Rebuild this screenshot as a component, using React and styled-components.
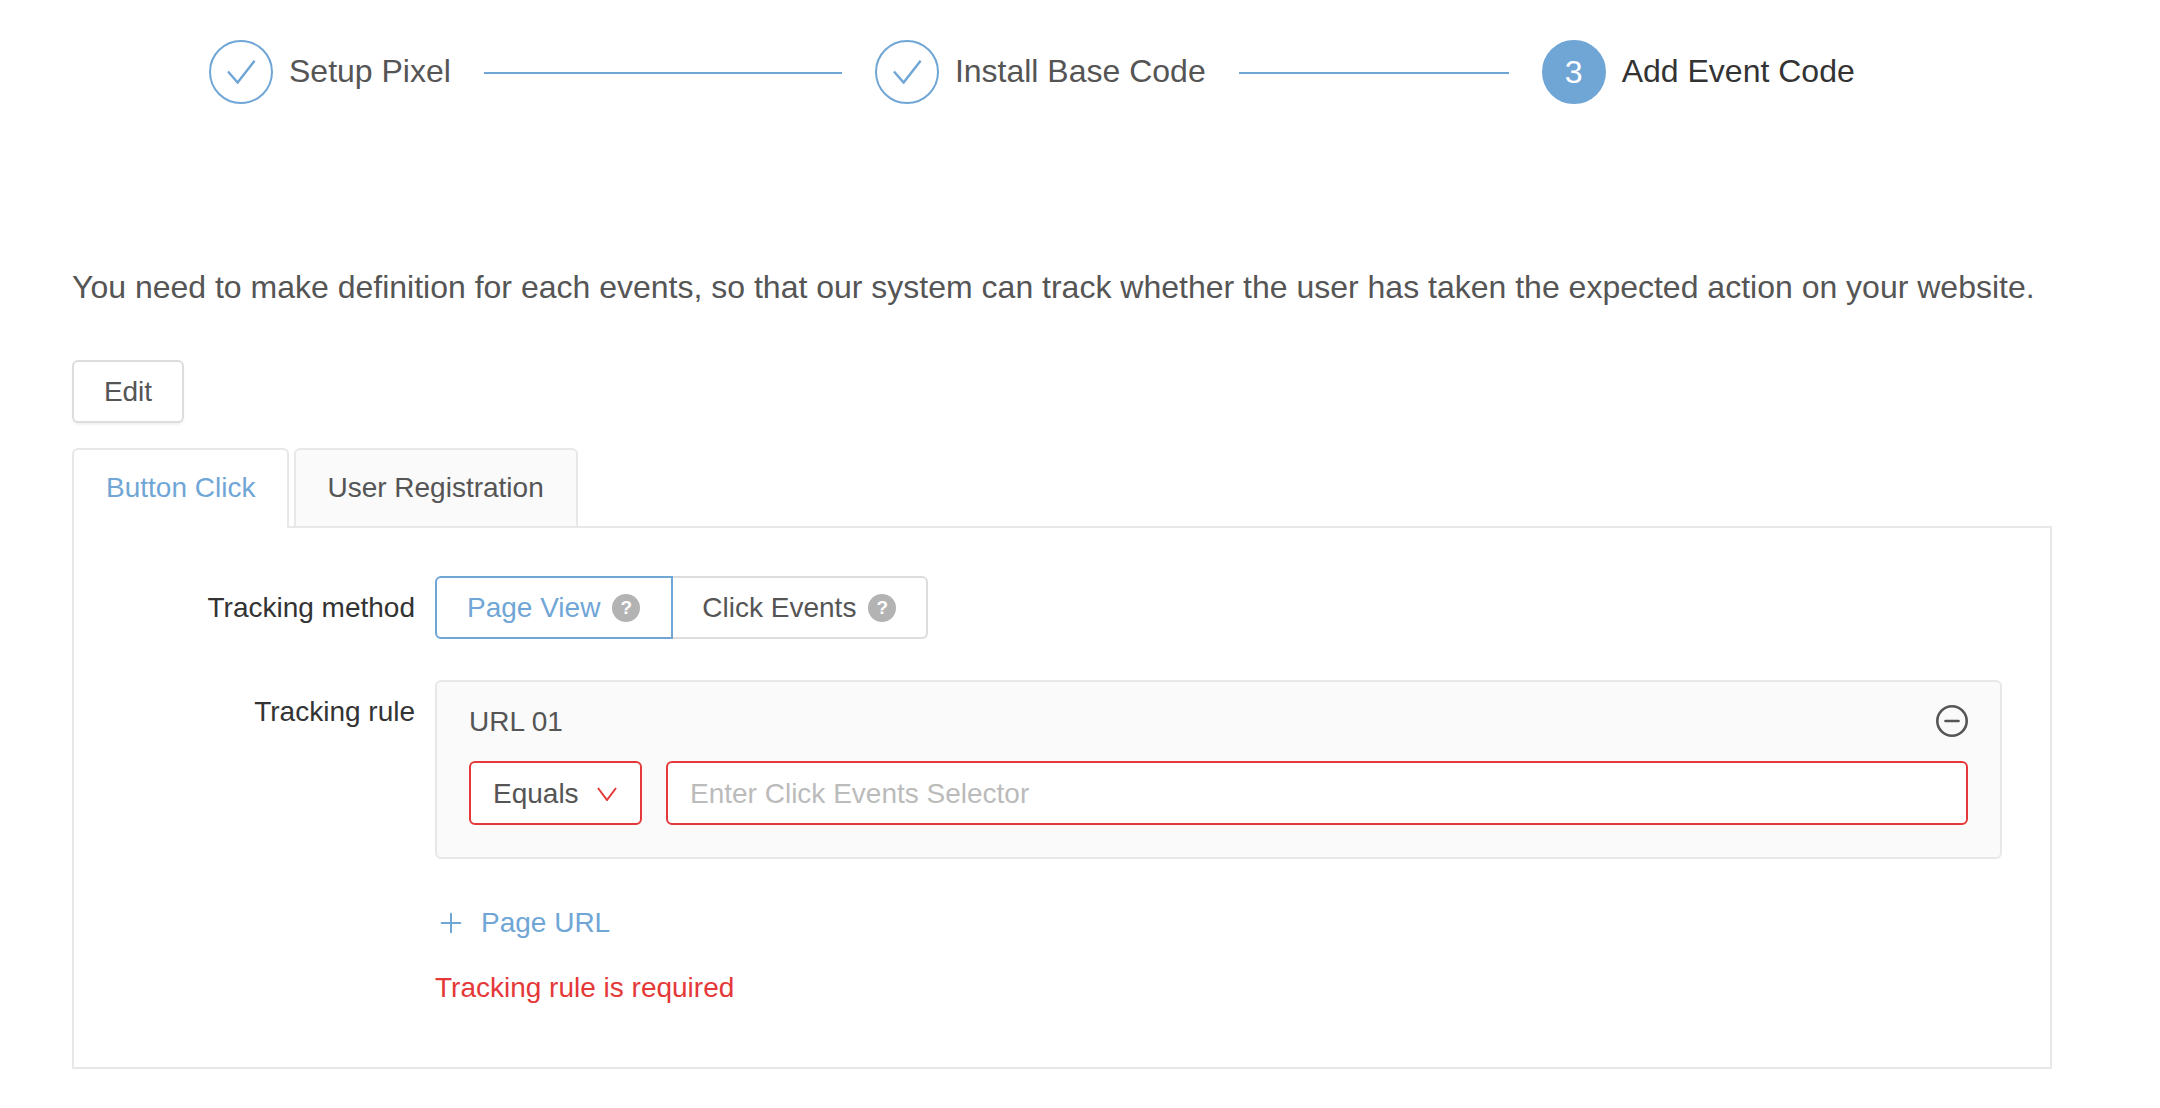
import React from 'react';
import styled, { createGlobalStyle } from 'styled-components';
import { Plus } from 'lucide-react';

const BLUE = '#70a6d6';
const RED = '#e53838';

const GlobalStyle = createGlobalStyle`
  html, body {
    margin: 0;
    padding: 0;
    background: #fff;
    overflow: hidden;
  }
  body {
    font-family: "Liberation Sans", Arial, sans-serif;
    color: #555;
  }
  * {
    box-sizing: border-box;
  }
`;

const Page = styled.div`
  width: 2160px;
  height: 1108px;
  padding: 40px 0 0 72px;
`;

const Stepper = styled.div`
  display: flex;
  align-items: center;
  height: 64px;
  padding-left: 137px;
`;

const StepCircle = styled.div`
  width: 64px;
  height: 64px;
  flex: none;
  border-radius: 50%;
  display: flex;
  align-items: center;
  justify-content: center;
  border: 2px solid ${BLUE};
  background: ${props => (props.$active ? BLUE : '#fff')};
  color: ${props => (props.$active ? '#fff' : BLUE)};
  font-size: 32px;
`;

const StepLabel = styled.span`
  margin: 0 0 2px 16px;
  font-size: 32px;
  line-height: 40px;
  white-space: nowrap;
  color: ${props => (props.$active ? '#333' : '#555')};
`;

const StepLine = styled.div`
  height: 2px;
  margin: 1px 33px 0;
  flex: none;
  width: ${props => props.$width}px;
  background: ${BLUE};
`;

const Intro = styled.p`
  margin: 163px 0 0;
  font-size: 32px;
  line-height: 40px;
  white-space: nowrap;
`;

const EditButton = styled.button`
  display: block;
  width: 112px;
  height: 63px;
  margin-top: 53px;
  padding: 0;
  background: #fff;
  border: 2px solid #ddd;
  border-radius: 6px;
  box-shadow: 0 2px 2px rgba(0, 0, 0, 0.05);
  font: inherit;
  font-size: 28px;
  color: #555;
`;

const Tabs = styled.div`
  display: flex;
  gap: 5px;
  margin-top: 25px;
  position: relative;
  z-index: 1;
`;

const Tab = styled.div`
  height: ${props => (props.$active ? 80 : 78)}px;
  margin-bottom: ${props => (props.$active ? -2 : 0)}px;
  padding: ${props => (props.$active ? '0 32px 2px' : '0 32px 0 31px')};
  display: flex;
  align-items: center;
  font-size: 28px;
  border: 2px solid #e8e8e8;
  border-bottom: none;
  border-radius: 6px 6px 0 0;
  background: ${props => (props.$active ? '#fff' : '#fafafa')};
  color: ${props => (props.$active ? BLUE : '#555')};
`;

const Panel = styled.div`
  width: 1980px;
  padding: 48px 0 59px;
  border: 2px solid #e8e8e8;
`;

const FormRow = styled.div`
  display: flex;
  align-items: flex-start;
  margin-top: ${props => props.$top || 0}px;
`;

const FormLabel = styled.div`
  width: 341px;
  margin-right: 20px;
  flex: none;
  text-align: right;
  font-size: 28px;
  line-height: 40px;
  padding-top: 12px;
  color: #333;
`;

const Segmented = styled.div`
  display: flex;
  height: 63px;
`;

const Segment = styled.div`
  display: flex;
  align-items: center;
  gap: 12px;
  height: 100%;
  font-size: 28px;
  padding: ${props => (props.$active ? '0 31px 0 30px' : '0 30px 0 29px')};
  border: 2px solid ${props => (props.$active ? BLUE : '#ddd')};
  border-left-width: ${props => (props.$active ? 2 : 0)}px;
  border-radius: ${props => (props.$active ? '6px 0 0 6px' : '0 6px 6px 0')};
  color: ${props => (props.$active ? BLUE : '#555')};
`;

const Help = styled.span`
  width: 28px;
  height: 28px;
  border-radius: 50%;
  background: #b3b3b3;
  color: #fff;
  font-size: 19px;
  font-weight: 700;
  line-height: 28px;
  text-align: center;
`;

const RuleColumn = styled.div`
  width: 1567px;
`;

const RuleBox = styled.div`
  height: 179px;
  padding: 23px 32px 32px 32px;
  background: #fafafa;
  border: 2px solid #e8e8e8;
  border-radius: 6px;
`;

const RuleHead = styled.div`
  display: flex;
  align-items: center;
  justify-content: space-between;
  height: 32px;
  font-size: 28px;
`;

const RuleTitle = styled.span`
  padding-top: 1px;
`;

const RuleInputs = styled.div`
  display: flex;
  gap: 24px;
  margin-top: 24px;
`;

const SelectBox = styled.div`
  width: 173px;
  height: 64px;
  flex: none;
  display: flex;
  align-items: center;
  justify-content: space-between;
  padding: 1px 23px 0 22px;
  background: #fff;
  border: 2px solid ${RED};
  border-radius: 6px;
  font-size: 28px;
  color: #555;
`;

const TextInput = styled.input`
  flex: 1;
  min-width: 0;
  height: 64px;
  padding: 1px 22px 0;
  background: #fff;
  border: 2px solid ${RED};
  border-radius: 6px;
  outline: none;
  font: inherit;
  font-size: 28px;

  &::placeholder {
    color: #bbb;
    opacity: 1;
  }
`;

const AddLink = styled.div`
  display: flex;
  align-items: center;
  gap: 14px;
  height: 40px;
  margin-top: 44px;
  font-size: 28px;
  color: ${BLUE};
`;

const ErrorText = styled.div`
  margin-top: 25px;
  font-size: 28px;
  line-height: 40px;
  color: ${RED};
`;

const CheckMark = () => (
  <svg width="30" height="24" viewBox="0 0 30 24" fill="none" stroke={BLUE} strokeWidth="2.4">
    <path d="M2 11.5 11.6 22.6 28.6 .8" />
  </svg>
);

const MinusIcon = () => (
  <svg width="32" height="32" viewBox="0 0 32 32" fill="none" stroke="#555" strokeWidth="2.6" strokeLinecap="round">
    <circle cx="16" cy="16" r="14.7" />
    <path d="M9.5 16h13" />
  </svg>
);

const Chevron = () => (
  <svg width="20" height="14" viewBox="0 0 20 14" fill="none" stroke={RED} strokeWidth="2">
    <path d="M1 1l9 12 9-12" />
  </svg>
);

const App = () => (
  <>
    <GlobalStyle />
    <Page>
      <Stepper>
        <StepCircle><CheckMark /></StepCircle>
        <StepLabel>Setup Pixel</StepLabel>
        <StepLine $width={358} />
        <StepCircle><CheckMark /></StepCircle>
        <StepLabel>Install Base Code</StepLabel>
        <StepLine $width={270} />
        <StepCircle $active>3</StepCircle>
        <StepLabel $active>Add Event Code</StepLabel>
      </Stepper>

      <Intro>You need to make definition for each events, so that our system can track whether the user has taken the expected action on your website.</Intro>

      <EditButton>Edit</EditButton>

      <Tabs>
        <Tab $active>Button Click</Tab>
        <Tab>User Registration</Tab>
      </Tabs>

      <Panel>
        <FormRow>
          <FormLabel>Tracking method</FormLabel>
          <Segmented>
            <Segment $active>Page View <Help>?</Help></Segment>
            <Segment>Click Events <Help>?</Help></Segment>
          </Segmented>
        </FormRow>

        <FormRow $top={41}>
          <FormLabel>Tracking rule</FormLabel>
          <RuleColumn>
            <RuleBox>
              <RuleHead>
                <RuleTitle>URL 01</RuleTitle>
                <MinusIcon />
              </RuleHead>
              <RuleInputs>
                <SelectBox>
                  Equals
                  <Chevron />
                </SelectBox>
                <TextInput placeholder="Enter Click Events Selector" />
              </RuleInputs>
            </RuleBox>
            <AddLink>
              <Plus size={32} strokeWidth={1.5} />
              Page URL
            </AddLink>
            <ErrorText>Tracking rule is required</ErrorText>
          </RuleColumn>
        </FormRow>
      </Panel>
    </Page>
  </>
);

export default App;
